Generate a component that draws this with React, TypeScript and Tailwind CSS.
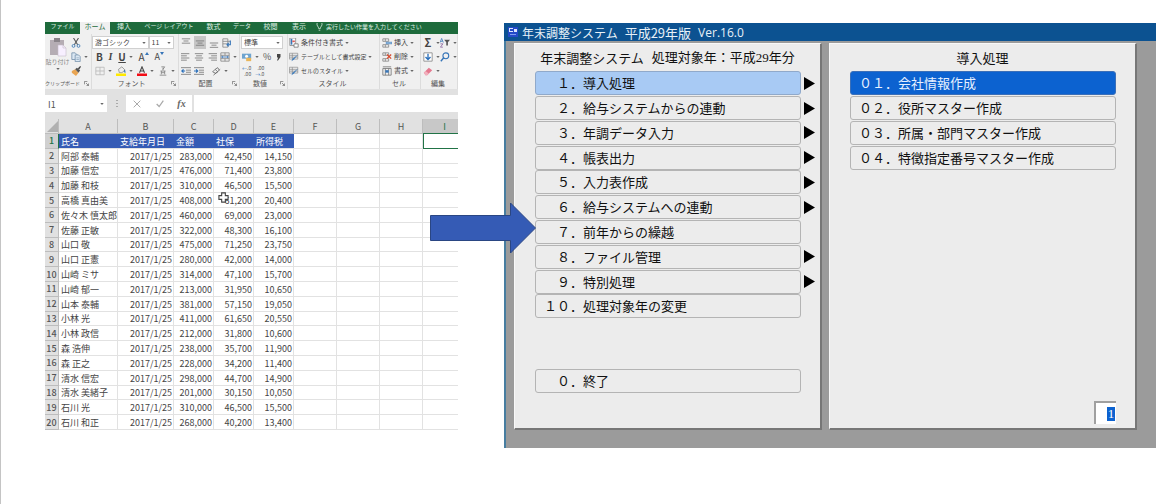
import type { ReactNode } from "react";

const people: string[][] = [
  ["阿部 泰輔", "283,000", "42,450", "14,150"],
  ["加藤 信宏", "476,000", "71,400", "23,800"],
  ["加藤 和枝", "310,000", "46,500", "15,500"],
  ["高橋 真由美", "408,000", "61,200", "20,400"],
  ["佐々木 慎太郎", "460,000", "69,000", "23,000"],
  ["佐藤 正敏", "322,000", "48,300", "16,100"],
  ["山口 敬", "475,000", "71,250", "23,750"],
  ["山口 正憲", "280,000", "42,000", "14,000"],
  ["山崎 ミサ", "314,000", "47,100", "15,700"],
  ["山崎 郁一", "213,000", "31,950", "10,650"],
  ["山本 泰輔", "381,000", "57,150", "19,050"],
  ["小林 光", "411,000", "61,650", "20,550"],
  ["小林 政信", "212,000", "31,800", "10,600"],
  ["森 浩伸", "238,000", "35,700", "11,900"],
  ["森 正之", "228,000", "34,200", "11,400"],
  ["清水 信宏", "298,000", "44,700", "14,900"],
  ["清水 美緒子", "201,000", "30,150", "10,050"],
  ["石川 光", "310,000", "46,500", "15,500"],
  ["石川 和正", "268,000", "40,200", "13,400"],
];

const mainMenu = [
  { no: "１．", label: "導入処理", sub: true },
  { no: "２．", label: "給与システムからの連動", sub: true },
  { no: "３．", label: "年調データ入力", sub: true },
  { no: "４．", label: "帳表出力", sub: true },
  { no: "５．", label: "入力表作成", sub: true },
  { no: "６．", label: "給与システムへの連動", sub: true },
  { no: "７．", label: "前年からの繰越", sub: false },
  { no: "８．", label: "ファイル管理", sub: true },
  { no: "９．", label: "特別処理", sub: true },
  { no: "１０．", label: "処理対象年の変更", sub: false },
];

const subMenu = [
  { no: "０１．", label: "会社情報作成" },
  { no: "０２．", label: "役所マスター作成" },
  { no: "０３．", label: "所属・部門マスター作成" },
  { no: "０４．", label: "特徴指定番号マスター作成" },
];

function Caret() {
  return (
    <svg viewBox="0 0 5 3" className="h-[2px] w-[4px] shrink-0" aria-hidden="true">
      <path d="M0 0h5L2.500 3z" fill="#666" />
    </svg>
  );
}

function Tool({ name, children, caret }: { name: string; children: ReactNode; caret?: boolean }) {
  return (
    <button type="button" aria-label={name} className="flex h-[13px] shrink-0 items-center gap-[3px]">
      {children}
      {caret && <Caret />}
    </button>
  );
}

function Art({ children }: { children: ReactNode }) {
  return (
    <svg viewBox="0 0 12 12" className="h-[10px] w-[10px] shrink-0" fill="none" aria-hidden="true">
      {children}
    </svg>
  );
}

function Lines({ widths, start, mode }: { widths: number[]; start: number; mode: "left" | "center" | "right" }) {
  return (
    <Art>
      {widths.map((w, i) => {
        const x = mode === "left" ? 0 : mode === "center" ? (12 - w) / 2 : 12 - w;
        return <path key={i} d={`M${x} ${start + i * 2.6}h${w}`} stroke="#777" strokeWidth="1" />;
      })}
    </Art>
  );
}

function Group({ label, launcher, children }: { label: string; launcher?: boolean; children: ReactNode }) {
  return (
    <section aria-label={label} className="flex min-w-0 flex-col border-r border-[#dcdcdc] pt-[2px]">
      <div className="flex h-[41px] min-w-0 flex-col justify-between">{children}</div>
      <div className="flex h-[12px] items-center whitespace-nowrap pr-[2px] text-[#555]">
        <span className={`flex-1 ${label.length > 5 ? "text-[5px]" : "text-center text-[7px]"}`}>{label}</span>
        {launcher && (
          <svg viewBox="0 0 6 6" className="h-[5px] w-[5px]" fill="none" stroke="#777" aria-hidden="true">
            <path d="M.5 4V.5H4M2.500 2.500L5.500 5.500M5.500 3v2.500H3" />
          </svg>
        )}
      </div>
    </section>
  );
}

function Combo({ name, value, className }: { name: string; value: string; className: string }) {
  return (
    <label className={`flex h-[13px] min-w-0 items-center border border-[#d0d0d0] bg-white pr-[2px] pl-[2px] ${className}`}>
      <select aria-label={name} className="w-full min-w-0 flex-1 appearance-none bg-transparent text-[7px] leading-[11px] text-[#444]">
        <option>{value}</option>
      </select>
      <Caret />
    </label>
  );
}

function TextTool({ icon, label, small }: { icon: ReactNode; label: string; small?: boolean }) {
  return (
    <button type="button" className="flex h-[13px] items-center gap-[2px] whitespace-nowrap text-[#444]">
      {icon}
      <span className={small ? "text-[6px]" : "text-[7px]"}>{label}</span>
      <Caret />
    </button>
  );
}

const styleArt = (
  <Art>
    <path d="M.5 1.500h10v7H.5zM.5 4h10M.5 6.200h10M4 1.500v7" stroke="#888" strokeWidth=".8" />
    <path d="M11 3L6 9l-3 2 1-3z" fill="#4580bd" />
  </Art>
);

function Ribbon() {
  return (
    <div className="grid h-[55px] grid-cols-[47fr_87fr_61fr_48fr_92fr_41fr_37fr] overflow-hidden bg-[#f0f0f0]">
      <Group label="クリップボード" launcher>
        <div className="flex h-full justify-between pr-[2px]">
          <button type="button" className="flex w-[25px] flex-col items-center whitespace-nowrap text-[6px] leading-[9px] text-[#888]">
            <svg viewBox="0 0 18 20" className="mt-[1px] h-[20px] w-[18px]" aria-hidden="true">
              <path d="M1 3h14v15H1z" fill="#b5adb4" />
              <path d="M5 1h6v4H5z" fill="#8a848a" />
              <path d="M9 8h5l3 3v8H9z" fill="#f7efff" stroke="#c8bdca" strokeWidth=".6" />
              <path d="M14 8v3h3" fill="none" stroke="#c8bdca" strokeWidth=".6" />
            </svg>
            <span>貼り付け</span>
            <span className="pt-[2px]"><Caret /></span>
          </button>
          <div className="flex w-[18px] flex-col justify-between">
            <Tool name="切り取り">
              <Art>
                <path d="M3 0l5 8M9 0L4 8" stroke="#555" strokeWidth="1.300" />
                <circle cx="3" cy="9.500" r="1.700" stroke="#3b78b5" /><circle cx="9" cy="9.500" r="1.700" stroke="#3b78b5" />
              </Art>
            </Tool>
            <Tool name="コピー" caret>
              <Art>
                <path d="M1 1h4l2 2v6H1z" fill="#dce8f3" stroke="#7793ac" /><path d="M5 3.500h4l2 2v6H5z" fill="#dce8f3" stroke="#7793ac" />
                <path d="M6.500 7h3M6.500 9h3" stroke="#7793ac" strokeWidth=".7" />
              </Art>
            </Tool>
            <Tool name="書式のコピー">
              <Art>
                <path d="M1 6l4-2 4 4-3 4-5-4z" fill="#e9a553" /><path d="M5 4l2-2 4 3-2 3z" fill="#555" /><path d="M8 3l3-3 1 1-2 3z" fill="#444" />
              </Art>
            </Tool>
          </div>
        </div>
      </Group>

      <Group label="フォント" launcher>
        <div className="flex pr-[4px]">
          <Combo name="フォント" value="游ゴシック" className="flex-[60]" />
          <Combo name="サイズ" value="11" className="flex-[23]" />
        </div>
        <div className="flex items-center justify-between pr-[14px] pl-[4px] text-[10px] leading-[13px] text-[#444]">
          <button type="button" className="font-bold">B</button>
          <button type="button" className="font-['Liberation_Serif'] font-bold italic">I</button>
          <Tool name="下線" caret><span className="font-bold underline">U</span></Tool>
          <button type="button" aria-label="拡大" className="flex">A<svg viewBox="0 0 4 4" className="mt-[2px] h-[4px] w-[4px]" aria-hidden="true"><path d="M0 3l2-3 2 3z" fill="#3675b8" /></svg></button>
          <button type="button" aria-label="縮小" className="flex text-[9px]">A<svg viewBox="0 0 4 4" className="mt-[2px] h-[4px] w-[4px]" aria-hidden="true"><path d="M0 0h4L2 3z" fill="#3675b8" /></svg></button>
        </div>
        <div className="flex items-center justify-between pr-[3px] pl-[3px]">
          <Tool name="罫線" caret><Art><path d="M1 1.500h10v9H1zM6 1.500v9M1 6h10" stroke="#bbb" /></Art></Tool>
          <Tool name="塗りつぶし" caret>
            <Art><path d="M3 4l4-3 4 4-4 3H4z" fill="#eee" stroke="#777" strokeWidth=".8" /><path d="M10 5l1 3" stroke="#3675b8" strokeWidth="1.500" /><path d="M0 9h12v3H0z" fill="#ffe900" /></Art>
          </Tool>
          <Tool name="フォントの色" caret>
            <Art><path d="M3 8l3-7 3 7M4 6h4" stroke="#444" strokeWidth="1.300" /><path d="M0 9h12v3H0z" fill="#f30d16" /></Art>
          </Tool>
          <Tool name="ふりがな" caret>
            <Art><path d="M4 1h4L6 4M6 2v3M3 6h6M4 8h4M4 6v4M8 6v4M2 11h8" stroke="#777" strokeWidth=".9" /></Art>
          </Tool>
        </div>
      </Group>

      <Group label="配置" launcher>
        <div className="flex h-[13px] items-center gap-[3px] pl-[2px]">
          <Tool name="上揃え"><Lines widths={[10, 6, 10]} start={1} mode="center" /></Tool>
          <button type="button" aria-label="中央" className="flex h-[13px] w-[12px] items-center justify-center bg-[#c6c6c6]"><Lines widths={[10, 6, 10]} start={3.500} mode="center" /></button>
          <Tool name="下揃え"><Lines widths={[10, 6, 10]} start={6} mode="center" /></Tool>
          <Tool name="折り返し"><Art><path d="M1 1h6v10H1zM1 4h9M1 7h5" stroke="#888" /><path d="M10 3v5H6M8 6L6 8l2 2" stroke="#3675b8" strokeWidth="1.300" /></Art></Tool>
        </div>
        <div className="flex h-[13px] items-center gap-[3px] pl-[2px]">
          <Tool name="左揃え"><Lines widths={[10, 7, 10, 7]} start={2} mode="left" /></Tool>
          <Tool name="中央揃え"><Lines widths={[10, 7, 10, 7]} start={2} mode="center" /></Tool>
          <Tool name="右揃え"><Lines widths={[10, 7, 10, 7]} start={2} mode="right" /></Tool>
          <Tool name="セルを結合" caret><Art><path d="M1 1h10v10H1zM1 4h10M1 8h10M6 1v3M6 8v3" stroke="#888" /><path d="M2 6h8M3.500 4.800L2 6l1.500 1.200M8.500 4.800L10 6 8.500 7.200" stroke="#3675b8" /></Art></Tool>
        </div>
        <div className="flex h-[13px] items-center gap-[3px] pl-[2px]">
          <Tool name="インデント解除"><Art><path d="M0 2h12M6 5h6M6 7.500h6M0 10h12" stroke="#777" /><path d="M5 6H1M3 4L1 6l2 2" stroke="#2a6fba" strokeWidth="1.400" /></Art></Tool>
          <Tool name="インデント"><Art><path d="M0 2h12M6 5h6M6 7.500h6M0 10h12" stroke="#777" /><path d="M0 6h4M2.500 4l2 2-2 2" stroke="#2a6fba" strokeWidth="1.400" /></Art></Tool>
          <span className="w-[1px]" />
          <Tool name="方向" caret><Art><path d="M2 7l3-3 3 3-2 2zM5 4l3-2 2 3M3 11l8-7" stroke="#666" /></Art></Tool>
        </div>
      </Group>

      <Group label="数値" launcher>
        <div className="flex pr-[4px] pl-[1px]"><Combo name="表示形式" value="標準" className="flex-1" /></div>
        <div className="flex h-[13px] items-center gap-[4px] pl-[2px] text-[#555]">
          <Tool name="通貨" caret><Art><path d="M0 2h11v6H0z" fill="#6ea4cf" /><circle cx="5.500" cy="5" r="1.800" fill="#fff" /><path d="M5 7h6v4H5z" fill="#e9b65a" /></Art></Tool>
          <button type="button" className="text-[9px] leading-[13px]">%</button>
          <button type="button" aria-label="桁区切り" className="pl-[1px]">
            <svg viewBox="0 0 5 8" className="h-[8px] w-[5px]" aria-hidden="true"><path d="M1 1h3.500v3L2 7.500H1L2.200 4.500H1z" fill="#444" /></svg>
          </button>
        </div>
        <div className="flex h-[13px] items-center gap-[4px] pl-[2px] text-[5px] leading-[6px] text-[#555]">
          <button type="button" className="text-right"><span className="text-[#2a6fba]">←</span>.0<br />.00</button>
          <button type="button" className="text-right">.00<br /><span className="text-[#2a6fba]">→</span>.0</button>
        </div>
      </Group>

      <Group label="スタイル">
        <div className="flex h-full flex-col justify-between pl-[1px]">
          <TextTool label="条件付き書式" icon={<Art><path d="M1 0h7v9H1z" fill="#fff" stroke="#888" /><path d="M2 1h2v7H2z" fill="#3977b9" /><path d="M4 3h3v2H4z" fill="#df5c57" /><path d="M6 7h5v4H6z" fill="#fff" stroke="#777" /></Art>} />
          <TextTool label="テーブルとして書式設定" icon={styleArt} small />
          <TextTool label="セルのスタイル" icon={styleArt} small />
        </div>
      </Group>

      <Group label="セル">
        <div className="flex h-full flex-col justify-between pl-[2px]">
          <TextTool label="挿入" icon={<Art><path d="M1 1h7v3H1zM1 8h7v3H1zM4 1v3M4 8v3" stroke="#888" /><path d="M5 5h7v2H5z" fill="#8fb8dd" stroke="#3675b8" strokeWidth=".6" /></Art>} />
          <TextTool label="削除" icon={<Art><path d="M1 1h7v3H1zM1 8h7v3H1zM4 1v3M4 8v3" stroke="#888" /><path d="M6 3l5 5M11 3L6 8" stroke="#d9482b" strokeWidth="1.500" /></Art>} />
          <TextTool label="書式" icon={<Art><path d="M1 3h10v8H1zM4 3v8M8 3v8M1 1h10" stroke="#777" /><path d="M4 5h4v3H4z" fill="#3675b8" /></Art>} />
        </div>
      </Group>

      <Group label="編集">
        <div className="flex h-[13px] items-center justify-between pl-[2px]">
          <Tool name="合計" caret><span className="w-[10px] text-[11px] leading-[13px] font-bold text-[#444]">Σ</span></Tool>
          <Tool name="並べ替え" caret><Art><path d="M0 5.500l2-5 2 5M1 4h2" stroke="#3675b8" strokeWidth=".9" /><path d="M.5 7h3l-3 4h3" stroke="#845a9b" strokeWidth=".9" /><path d="M5 2h7L9.500 5v4h-2V5z" fill="#555" /></Art></Tool>
        </div>
        <div className="flex h-[13px] items-center justify-between pl-[2px]">
          <Tool name="フィル" caret><Art><path d="M1 1h10v10H1z" fill="#fff" stroke="#888" /><path d="M6 2v7M3 6l3 3 3-3" stroke="#2a6fba" strokeWidth="1.600" /></Art></Tool>
          <Tool name="検索" caret><Art><circle cx="7" cy="4.500" r="3.500" stroke="#3675b8" strokeWidth="1.300" /><path d="M4.500 7L1 11" stroke="#3675b8" strokeWidth="1.700" /></Art></Tool>
        </div>
        <div className="flex h-[13px] items-center pl-[2px]">
          <Tool name="クリア" caret><Art><path d="M1 8l6-6 4 3-6 6H3z" fill="#e4798f" /><path d="M1 8l2-2 4 3-2 2H3z" fill="#f2b0bd" /></Art></Tool>
        </div>
      </Group>
    </div>
  );
}

function Tabs() {
  const tab = "flex items-center justify-center whitespace-nowrap pb-[4px]";
  return (
    <nav className="grid h-[12px] grid-cols-[35fr_30fr_28fr_62fr_27fr_30fr_27fr_30fr_144fr] overflow-hidden bg-[#1e6b3c] text-[7px] leading-[8px] text-[#dcebe1]">
      <button type="button" className={`${tab} text-[6px]`}>ファイル</button>
      <button type="button" className={`${tab} bg-[#f0f0f0] text-[#1e6b3c]`}>ホーム</button>
      <button type="button" className={tab}>挿入</button>
      <button type="button" className={`${tab} text-[6px]`}>ページ レイアウト</button>
      <button type="button" className={tab}>数式</button>
      <button type="button" className={`${tab} text-[6px]`}>データ</button>
      <button type="button" className={tab}>校閲</button>
      <button type="button" className={tab}>表示</button>
      <button type="button" className="flex items-center gap-[3px] pb-[3px] pl-[2px] text-[6px] whitespace-nowrap">
        <svg viewBox="0 0 8 10" className="h-[8px] w-[7px]" fill="none" stroke="#dcebe1" aria-hidden="true"><path d="M1 0c-1 4 2 4 2 7h2c0-3 3-3 2-7M3 9h2" /></svg>
        実行したい作業を入力してください
      </button>
    </nav>
  );
}

function FormulaBar() {
  return (
    <div className="flex h-[30px] gap-[2px] bg-[#e1e1e1] pt-[6px] pb-[7px]">
      <div className="flex w-[62px] items-center bg-white pr-[3px]">
        <input aria-label="名前ボックス" defaultValue="I1" className="w-full min-w-0 bg-transparent pt-[2px] pl-[3px] text-[9px] text-[#555] outline-none" />
        <Caret />
      </div>
      <div className="flex w-[15px] items-center justify-center">
        <svg viewBox="0 0 2 8" className="h-[8px] w-[2px]" fill="#aaa" aria-hidden="true"><path d="M0 0h2v1H0zM0 3h2v1H0zM0 6h2v1H0z" /></svg>
      </div>
      <div className="flex w-[66px] items-center justify-around bg-white">
        <button type="button" aria-label="キャンセル"><Art><path d="M2 2l8 8M10 2L2 10" stroke="#aaa" strokeWidth="1.200" /></Art></button>
        <button type="button" aria-label="入力"><Art><path d="M2 6l3 3 5-7" stroke="#aaa" strokeWidth="1.500" /></Art></button>
        <button type="button" className="font-['Liberation_Serif'] text-[10px] leading-[12px] font-bold text-[#666] italic">fx</button>
      </div>
      <input aria-label="数式バー" className="min-w-0 flex-1 bg-white outline-none" />
    </div>
  );
}

function Sheet() {
  const letter = "h-[15px] border-r border-b border-[#bdbdbd] bg-[#e1e1e1] p-0 text-[9px] leading-[9px] font-normal text-[#555]";
  const rowNo = "border-r border-b border-[#bdbdbd] bg-[#e1e1e1] p-0 text-[9px] leading-[9px] font-medium text-[#555]";
  const cell = "overflow-hidden whitespace-nowrap border-r border-b border-[#e2e2e2] p-0 pt-[1px]";
  const title = "border-b border-[#e2e2e2] bg-[#355bb5] p-0 pt-[1px] pl-[2px] text-left font-normal whitespace-nowrap text-white";
  return (
    <div className="relative">
      <table className="h-[311px] w-full table-fixed border-separate border-spacing-0 bg-white text-[9px] leading-[9px] text-[#444]">
        <colgroup>
          <col className="w-[14px]" /><col className="w-[59px]" /><col className="w-[56px]" /><col className="w-[40px]" /><col className="w-[40px]" />
          <col className="w-[40px]" /><col className="w-[43px]" /><col className="w-[43px]" /><col className="w-[43px]" /><col className="w-[35px]" />
        </colgroup>
        <thead>
          <tr className="h-[15px]">
            <th className={letter}>
              <svg viewBox="0 0 12 12" className="ml-auto h-[11px] w-[11px]" aria-hidden="true"><path d="M12 0v12H0z" fill="#b1b1b1" /></svg>
            </th>
            {["A", "B", "C", "D", "E", "F", "G", "H"].map((c) => <th key={c} className={letter}>{c}</th>)}
            <th className="h-[15px] border-b border-[#217346] bg-[#c8c8c8] p-0 pl-[8px] text-[9px] leading-[9px] font-normal text-[#217346]">I</th>
          </tr>
        </thead>
        <tbody>
          <tr>
            <th className="border-r border-b border-[#bdbdbd] border-r-[#217346] bg-[#d0d0d0] p-0 text-[9px] leading-[9px] font-medium text-[#217346]">1</th>
            <td className={title}>氏名</td>
            <td className={title}>支給年月日</td>
            <td className={title}>金額</td>
            <td className={title}>社保</td>
            <td className={title}>所得税</td>
            <td className={cell} /><td className={cell} /><td className={cell} />
            <td className="border-b border-l border-[#217346] p-0" />
          </tr>
          {people.map((p, i) => (
            <tr key={i}>
              <th className={rowNo}>{i + 2}</th>
              <td className={`${cell} pl-[2px]`}>{p[0]}</td>
              <td className={`${cell} pr-[1px] text-right`}>2017/1/25</td>
              <td className={`${cell} pr-[1px] text-right`}>{p[1]}</td>
              <td className={`${cell} pr-[1px] text-right`}>{p[2]}</td>
              <td className={`${cell} pr-[1px] text-right`}>{p[3]}</td>
              <td className={cell} /><td className={cell} /><td className={cell} />
              <td className="border-b border-[#e2e2e2] p-0" />
            </tr>
          ))}
        </tbody>
      </table>
      <svg viewBox="0 0 12 12" className="absolute top-[73px] left-[173px] h-[11px] w-[11px]" aria-hidden="true">
        <path d="M4 1h4v3h3v4H8v3H4V8H1V4h3z" fill="#fff" stroke="#444" strokeWidth="1.200" />
      </svg>
    </div>
  );
}

const panel = "flex min-w-0 flex-1 flex-col border-t border-r-2 border-b-2 border-l border-t-[#f8f8f8] border-r-[#777] border-b-[#777] border-l-[#f8f8f8] bg-[#ececec]";
const menuGrid = "grid h-[322px] grid-rows-13";
const menuButton = "flex h-6 min-w-0 flex-1 items-center rounded-[3px] border pl-[8px] text-[13px] leading-[20px] whitespace-nowrap";
const idle = "border-[#b4b4b4] bg-[#ececec] text-[#111]";

function MenuText({ no, label }: { no: string; label: string }) {
  return (
    <>
      <span className="w-[39px] shrink-0 text-right">{no}</span>
      <span>{label}</span>
    </>
  );
}

function PayrollWindow() {
  return (
    <section aria-label="年末調整システム" className="mt-[1px] flex min-w-0 flex-col bg-[#9b9b9b]">
      <header className="flex h-[18px] items-center gap-[4px] bg-[#0c5291] pl-[4px] text-[#e8f1f8]">
        <svg viewBox="0 0 10 10" className="h-[10px] w-[10px]" aria-hidden="true">
          <path d="M0 0h10v10H0z" fill="#2449c8" /><path d="M1 1h4v1H2v2h3v1H1zM6 2h3v3H6z" fill="#dce6ff" /><path d="M2 7h6v1H2z" fill="#7f9cf0" />
        </svg>
        <h1 className="flex items-center gap-[7px] pt-[2px] text-[12px] leading-[16px] whitespace-nowrap">
          <span>年末調整システム</span>
          <span className="text-[13px]">平成29年版</span>
          <span className="font-['Open_Sans']">Ver.16.0</span>
        </h1>
      </header>
      <div className="flex h-[407px] gap-[7px] border-l-2 border-[#477da0] pt-[2px] pr-[19px] pb-[18px] pl-[8px]">
        <div className={panel}>
          <h2 className="flex h-[27px] items-center justify-center gap-[8px] text-[13px] whitespace-nowrap text-[#111]">
            <span>年末調整システム</span>
            <span>処理対象年：平成<span className="font-['Liberation_Serif']">29</span>年分</span>
          </h2>
          <div className={menuGrid}>
            {mainMenu.map((m, i) => (
              <div key={m.no} className="flex items-center gap-[3px] pr-[5px] pl-[20px]">
                <button type="button" className={`${menuButton} ${i === 0 ? "border-[#90a9ca] bg-[#a8caf4] text-[#111]" : idle}`}>
                  <MenuText no={m.no} label={m.label} />
                </button>
                <svg viewBox="0 0 11 13" className="h-[13px] w-[11px] shrink-0" aria-hidden="true">
                  {m.sub && <path d="M0 0l11 6.500L0 13z" fill="#000" />}
                </svg>
              </div>
            ))}
            <div className="row-start-13 flex items-center pr-[19px] pl-[20px]">
              <button type="button" className={`${menuButton} ${idle}`}>
                <MenuText no="０．" label="終了" />
              </button>
            </div>
          </div>
        </div>
        <div className={panel}>
          <h2 className="flex h-[27px] items-center justify-center text-[13px] text-[#111]">導入処理</h2>
          <div className={menuGrid}>
            {subMenu.map((m, i) => (
              <div key={m.no} className="flex items-center pr-[19px] pl-[20px]">
                <button type="button" className={`${menuButton} ${i === 0 ? "border-[#3b6fb8] bg-[#0c62d0] text-[#e6f0ff]" : idle}`}>
                  <MenuText no={m.no} label={m.label} />
                </button>
              </div>
            ))}
          </div>
          <div className="flex justify-end pt-[8px] pr-[19px]">
            <label className="flex h-[23px] w-[22px] items-center justify-end border-t-2 border-l-2 border-[#a0a0a0] bg-white pr-[1px]">
              <input aria-label="処理番号" defaultValue="1" className="h-[14px] w-[8px] bg-[#0c62d0] text-center font-['Liberation_Serif'] text-[13px] leading-[14px] text-white outline-none" />
            </label>
          </div>
        </div>
      </div>
    </section>
  );
}

export default function App() {
  return (
    <main className="grid min-h-screen grid-cols-[413fr_46fr_652fr] items-start border-l border-[#c4c4c4] bg-white pt-[22px] pr-[20px] pl-[44px] font-['Noto_Sans_CJK_JP',sans-serif]">
      <section aria-label="給与データ" className="min-w-0 overflow-hidden">
        <Tabs />
        <Ribbon />
        <FormulaBar />
        <Sheet />
      </section>
      <div className="relative z-10">
        <svg viewBox="0 0 106 52" className="absolute top-[180px] -left-[28px] h-[52px] w-[106px]" role="img" aria-label="取り込み">
          <path d="M.5 13.500H80.500V1L105.500 26 80.500 51V38.500H.5z" fill="#355bb5" stroke="#2a4683" />
        </svg>
      </div>
      <PayrollWindow />
    </main>
  );
}
